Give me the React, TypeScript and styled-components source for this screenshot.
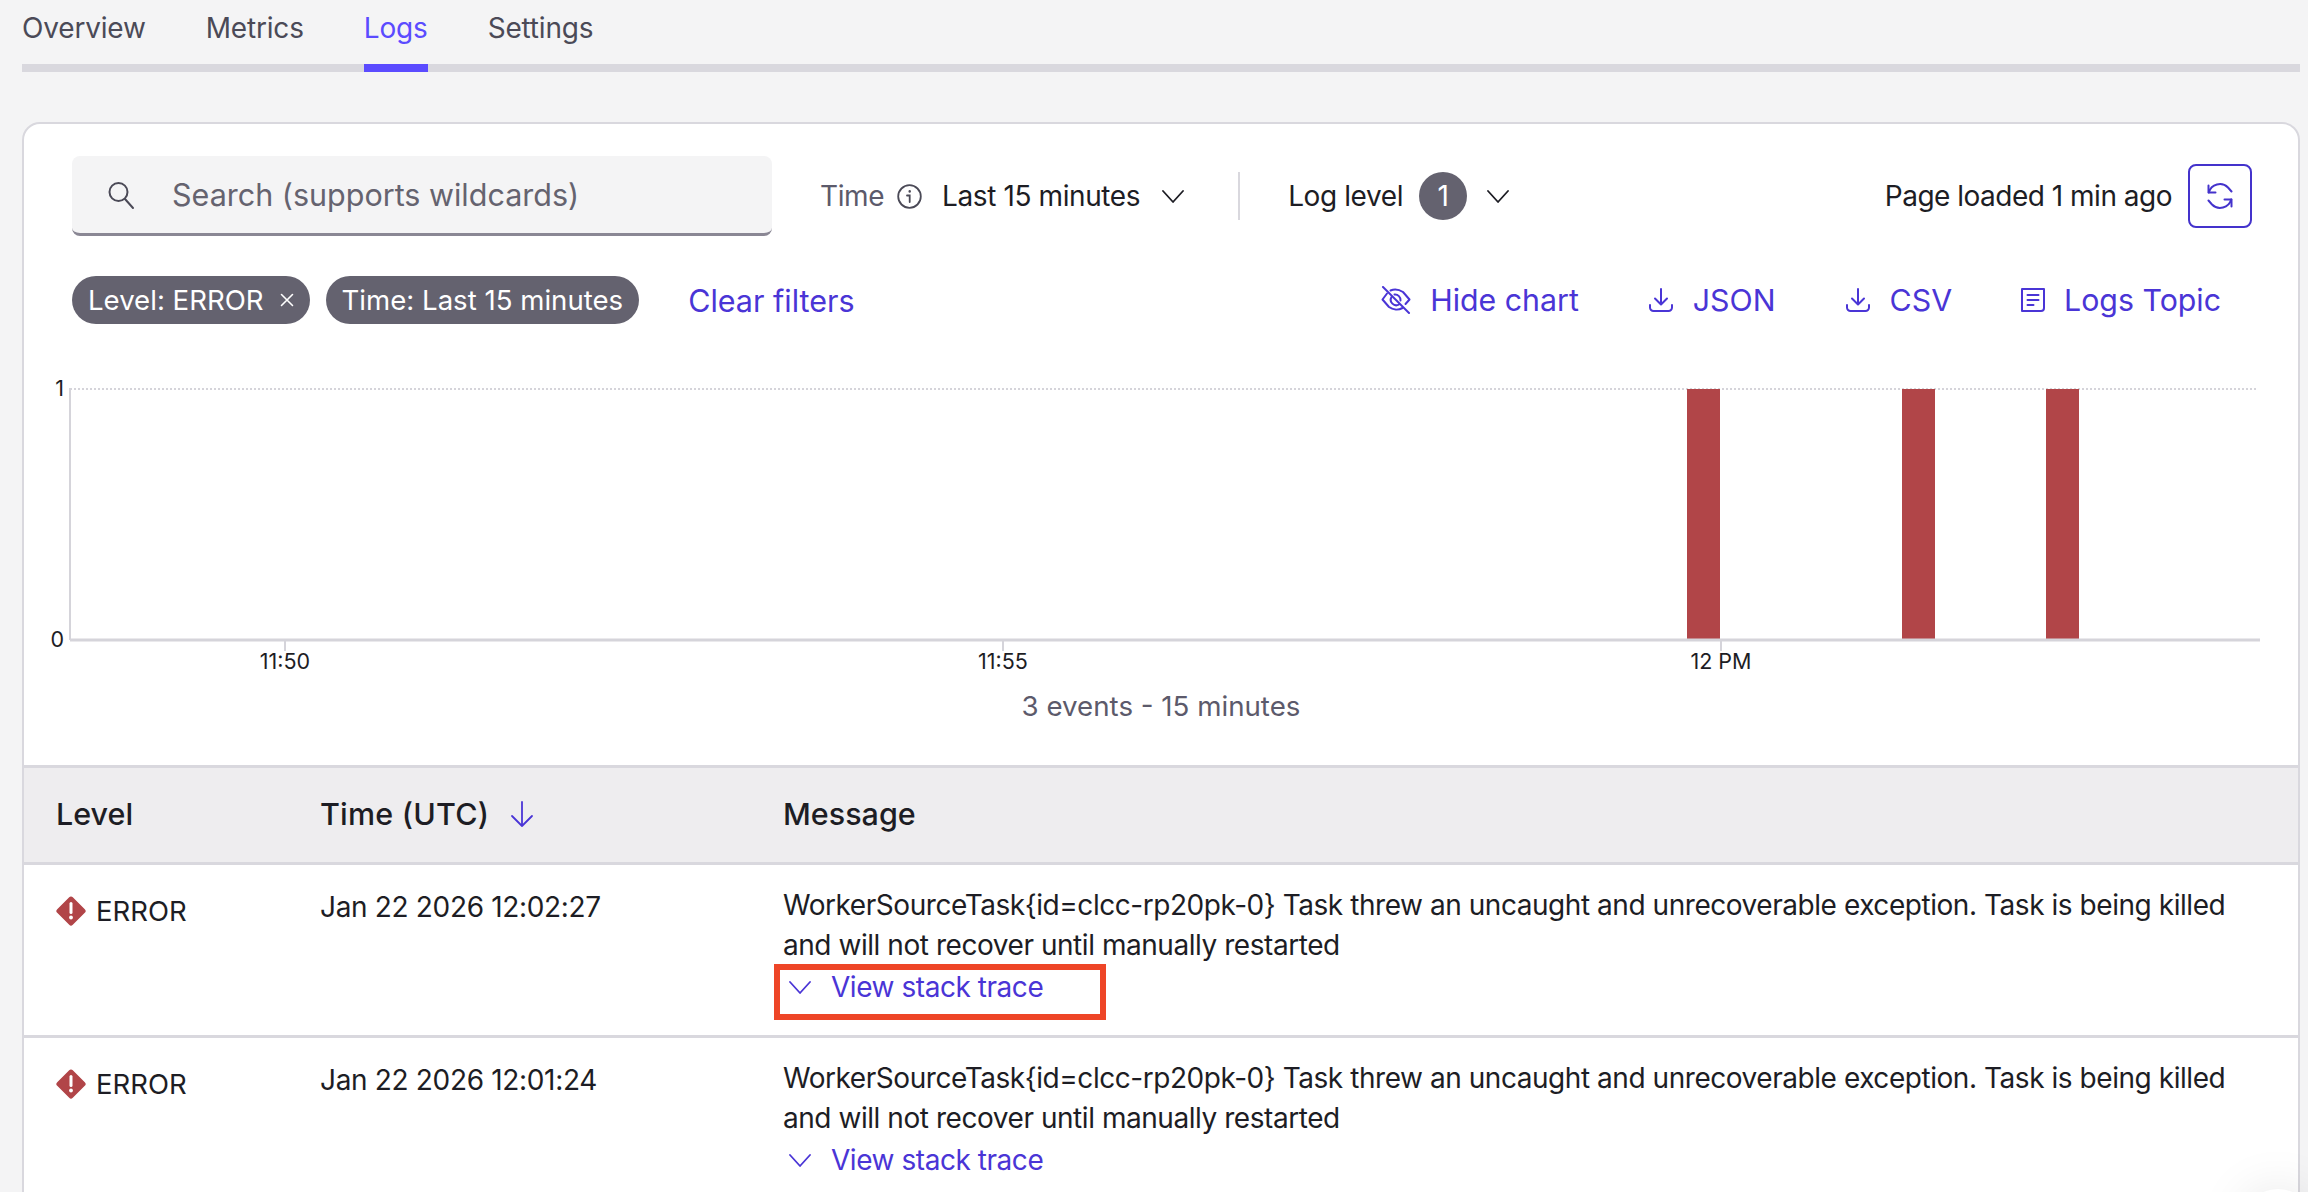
import React from 'react';
import styled, { createGlobalStyle } from 'styled-components';

const GlobalStyle = createGlobalStyle`
  html, body {
    margin: 0;
    height: 1192px;
    overflow: hidden;
    background: #f4f4f5;
    font-family: Inter, "Liberation Sans", sans-serif;
    color: #1d1d24;
  }
`;

const tabs = ['Overview', 'Metrics', 'Logs', 'Settings'];
const bars = [1663, 1878, 2022];
const ticks = [
  { x: 261, label: '11:50' },
  { x: 979, label: '11:55' },
  { x: 1697, label: '12 PM' }
];
const rows = [
  { time: 'Jan 22 2026 12:02:27', marked: true },
  { time: 'Jan 22 2026 12:01:24', marked: false }
];
const message =
  'WorkerSourceTask{id=clcc-rp20pk-0} Task threw an uncaught and unrecoverable exception. Task is being killed and will not recover until manually restarted';

function Chevron({ size = 22 }: { size?: number }) {
  return (
    <svg width={size} height={size} viewBox="0 0 22 22" fill="none" stroke="currentColor" strokeWidth="1.8">
      <path d="M1 6l10 11L21 6" strokeLinecap="round" strokeLinejoin="round" />
    </svg>
  );
}

function DownloadIcon() {
  return (
    <svg width="26" height="26" viewBox="0 0 26 26" fill="none" stroke="currentColor" strokeWidth="2" strokeLinecap="round" strokeLinejoin="round">
      <path d="M13 2v15M7 11.5l6 6 6-6" />
      <path d="M2 18v2.5a3.5 3.5 0 0 0 3.500 3.500h15a3.500 3.500 0 0 0 3.500-3.500V18" />
    </svg>
  );
}

function App() {
  return (
    <>
      <GlobalStyle />
      <Page>
        <TabBar>
          {tabs.map((tab) => (
            <Tab key={tab} $active={tab === 'Logs'}>
              {tab}
            </Tab>
          ))}
        </TabBar>
        <Card>
          <Filters>
            <TopRow>
              <SearchBox>
                <svg width="30" height="30" viewBox="0 0 30 30" fill="none" stroke="#4b4a57" strokeWidth="2" strokeLinecap="round">
                  <circle cx="12.500" cy="12" r="9" />
                  <path d="M19 19l8 9" />
                </svg>
                <span>Search (supports wildcards)</span>
              </SearchBox>
              <TimeGroup>
                <MutedLabel>Time</MutedLabel>
                <InfoWrap>
                  <svg width="25" height="25" viewBox="0 0 25 25" fill="none" stroke="#4b4a57" strokeWidth="1.800" strokeLinecap="round">
                    <circle cx="12.500" cy="12.500" r="11.300" />
                    <path d="M10 11.500h2.700v6.500" />
                    <path d="M12.700 7.300v.3" strokeWidth="2.400" />
                  </svg>
                </InfoWrap>
                <span>Last 15 minutes</span>
                <ChevronWrap>
                  <Chevron />
                </ChevronWrap>
              </TimeGroup>
              <Divider />
              <LevelGroup>
                <span>Log level</span>
                <CountBadge>1</CountBadge>
                <Chevron />
              </LevelGroup>
              <PageLoaded>
                <span>Page loaded 1 min ago</span>
                <RefreshButton>
                  <svg width="26" height="26" viewBox="0 0 26 26" fill="none" stroke="currentColor" strokeWidth="2" strokeLinecap="round" strokeLinejoin="round">
                    <path d="M1.500 2.500v7h7" />
                    <path d="M24.500 23.500v-7h-7" />
                    <path d="M1.800 9.500A11.500 11.500 0 0 1 21 4.500l3.500 4" />
                    <path d="M24.200 16.500A11.500 11.500 0 0 1 5 21.500l-3.500-4" />
                  </svg>
                </RefreshButton>
              </PageLoaded>
            </TopRow>
            <ChipRow>
              <Chip>
                Level: ERROR
                <svg width="14" height="14" viewBox="0 0 14 14" stroke="#fff" strokeWidth="1.600" strokeLinecap="round">
                  <path d="M1.500 1.500l11 11M12.500 1.500l-11 11" />
                </svg>
              </Chip>
              <Chip>Time: Last 15 minutes</Chip>
              <ClearLink>Clear filters</ClearLink>
              <Actions>
                <ActionLink>
                  <svg width="30" height="28" viewBox="0 0 30 28" fill="none" stroke="currentColor" strokeWidth="2" strokeLinecap="round" strokeLinejoin="round">
                    <path d="M2 1l26 26" />
                    <path d="M6 7.500L1.500 13.500 8 21c4 3 9.500 3.200 13.500 1M24.500 18l4-4.500L22 6C18 3.500 13.500 3 9.500 4.500" />
                    <path d="M10.500 11A5.500 5.500 0 0 0 18 18.500M13.500 8.500a5.500 5.500 0 0 1 6 6" />
                  </svg>
                  Hide chart
                </ActionLink>
                <ActionLink>
                  <DownloadIcon />
                  JSON
                </ActionLink>
                <ActionLink>
                  <DownloadIcon />
                  CSV
                </ActionLink>
                <ActionLink>
                  <svg width="24" height="26" viewBox="0 0 24 26" fill="none" stroke="currentColor" strokeWidth="2" strokeLinecap="round" strokeLinejoin="round">
                    <path d="M3 2h20v19a3 3 0 0 1-3 3H1V2z" />
                    <path d="M6.500 8h11M6.500 13h11M6.500 18h6" />
                  </svg>
                  Logs Topic
                </ActionLink>
              </Actions>
            </ChipRow>
          </Filters>

          <ChartWrap>
            <svg width="2276" height="320" viewBox="0 0 2276 320">
              <line x1="46" y1="29" x2="2232" y2="29" stroke="#d5d4da" strokeWidth="2" strokeDasharray="2 2" />
              <line x1="46" y1="28" x2="46" y2="280" stroke="#d5d4da" strokeWidth="2" />
              {bars.map((x) => (
                <rect key={x} x={x} y="29" width="33" height="251" fill="#b14548" />
              ))}
              <line x1="46" y1="280" x2="2236" y2="280" stroke="#d5d4da" strokeWidth="3" />
              {ticks.map((t) => (
                <g key={t.label}>
                  <line x1={t.x} y1="281" x2={t.x} y2="291" stroke="#d5d4da" strokeWidth="2" />
                  <AxisText x={t.x} y="309" textAnchor="middle">
                    {t.label}
                  </AxisText>
                </g>
              ))}
              <AxisText x="40" y="36" textAnchor="end">1</AxisText>
              <AxisText x="40" y="287" textAnchor="end">0</AxisText>
            </svg>
            <ChartCaption>3 events - 15 minutes</ChartCaption>
          </ChartWrap>

          <TableHead>
            <HeadLevel>Level</HeadLevel>
            <SortCell>
              Time (UTC)
              <svg width="24" height="28" viewBox="0 0 24 28" fill="none" stroke="#4a35d6" strokeWidth="1.800" strokeLinecap="round" strokeLinejoin="round">
                <path d="M12 2v24M2 16l10 10 10-10" />
              </svg>
            </SortCell>
            <span>Message</span>
          </TableHead>

          {rows.map((row) => (
            <LogRow key={row.time}>
              <LevelCell>
                <svg width="30" height="30" viewBox="0 0 30 30">
                  <path d="M15 .5a2.500 2.500 0 0 1 1.800.7l12 12a2.500 2.500 0 0 1 0 3.600l-12 12a2.500 2.500 0 0 1-3.600 0l-12-12a2.500 2.500 0 0 1 0-3.600l12-12A2.500 2.500 0 0 1 15 .5z" fill="#b14548" />
                  <path d="M15 7.500v9" stroke="#fff" strokeWidth="3" strokeLinecap="round" />
                  <circle cx="15" cy="21.500" r="1.900" fill="#fff" />
                </svg>
                ERROR
              </LevelCell>
              <TimeCell>{row.time}</TimeCell>
              <MessageCell>
                <MessageText>{message}</MessageText>
                <StackLink>
                  <Chevron size={22} />
                  View stack trace
                  {row.marked && <Annotation />}
                </StackLink>
              </MessageCell>
            </LogRow>
          ))}
        </Card>
      </Page>
      <CornerWidget />
    </>
  );
}

export default App;

const Page = styled.div`
  padding: 0 8px 0 22px;
`;

const TabBar = styled.div`
  display: flex;
  align-items: flex-start;
  gap: 60px;
  height: 64px;
  border-bottom: 8px solid #d9d8de;
`;

const Tab = styled.div<{ $active: boolean }>`
  height: 56px;
  padding-top: 8px;
  font-size: 28px;
  line-height: 40px;
  letter-spacing: -0.18px;
  color: ${(p) => (p.$active ? '#5b4bff' : '#4b4a57')};
  border-bottom: 8px solid ${(p) => (p.$active ? '#5b4bff' : 'transparent')};
`;

const Card = styled.div`
  margin-top: 50px;
  height: 1100px;
  background: #fff;
  border: 2px solid #d9d8de;
  border-radius: 18px 18px 0 0;
  overflow: hidden;
`;

const Filters = styled.div`
  padding: 32px 48px 0;
`;

const TopRow = styled.div`
  display: flex;
  align-items: center;
  font-size: 28px;
  letter-spacing: -0.4px;
  height: 80px;
`;

const SearchBox = styled.div`
  display: flex;
  align-items: center;
  gap: 36px;
  box-sizing: border-box;
  width: 700px;
  height: 80px;
  padding-left: 34px;
  background: #f4f4f5;
  border-bottom: 3px solid #8a8794;
  border-radius: 8px;
  font-size: 30.5px;
  letter-spacing: 0;
  color: #65636f;
`;

const TimeGroup = styled.div`
  display: flex;
  align-items: center;
  margin-left: 48px;
`;

const MutedLabel = styled.span`
  color: #5c5a6b;
`;

const InfoWrap = styled.span`
  display: flex;
  margin: 0 20px 0 13px;
`;

const ChevronWrap = styled.span`
  display: flex;
  margin-left: 22px;
`;

const Divider = styled.div`
  width: 2px;
  height: 48px;
  margin: 0 48px 0 54px;
  background: #d9d8de;
`;

const LevelGroup = styled.div`
  display: flex;
  align-items: center;
  gap: 16px;
`;

const CountBadge = styled.span`
  display: flex;
  align-items: center;
  justify-content: center;
  width: 48px;
  height: 48px;
  margin-right: 4px;
  border-radius: 50%;
  background: #64626f;
  color: #fff;
`;

const PageLoaded = styled.div`
  display: flex;
  align-items: center;
  gap: 16px;
  margin-left: auto;
  margin-right: -2px;
  letter-spacing: -0.5px;
`;

const RefreshButton = styled.div`
  display: flex;
  align-items: center;
  justify-content: center;
  box-sizing: border-box;
  width: 64px;
  height: 64px;
  border: 2px solid #4433cc;
  border-radius: 8px;
  color: #4433cc;
`;

const ChipRow = styled.div`
  display: flex;
  align-items: center;
  gap: 16px;
  margin-top: 40px;
  height: 48px;
`;

const Chip = styled.span`
  display: flex;
  align-items: center;
  gap: 16px;
  height: 48px;
  padding: 0 16px;
  border-radius: 24px;
  background: #64626f;
  color: #fff;
  font-size: 27.6px;
`;

const ClearLink = styled.span`
  margin-left: 33px;
  color: #4a35d6;
  font-size: 30.5px;
`;

const Actions = styled.div`
  display: flex;
  align-items: center;
  gap: 69px;
  margin-left: auto;
  margin-right: 29px;
`;

const ActionLink = styled.span`
  display: flex;
  align-items: center;
  gap: 19px;
  color: #4a35d6;
  font-size: 30.3px;
`;

const ChartWrap = styled.div`
  margin-top: 36px;
  padding-bottom: 39px;
`;

const AxisText = styled.text`
  font-family: Inter, "Liberation Sans", sans-serif;
  font-size: 21.5px;
  fill: #1d1d24;
`;

const ChartCaption = styled.div`
  margin-top: 2px;
  text-align: center;
  font-size: 27.7px;
  line-height: 40px;
  color: #5c5a6b;
`;

const columns = `
  display: grid;
  grid-template-columns: 263px 463px 1fr;
  padding: 0 33px;
`;

const TableHead = styled.div`
  ${columns}
  align-items: center;
  box-sizing: content-box;
  height: 91px;
  padding-bottom: 3px;
  background: #eeedef;
  border-top: 3px solid #d9d8de;
  border-bottom: 3px solid #d9d8de;
  font-size: 30.5px;
  font-weight: 450;
`;

const HeadLevel = styled.span`
  margin-left: -1px;
`;

const SortCell = styled.span`
  display: flex;
  align-items: center;
  gap: 21px;
  letter-spacing: 0.2px;
`;

const LogRow = styled.div`
  ${columns}
  padding-top: 20px;
  padding-bottom: 0;
  box-sizing: border-box;
  height: 173px;
  border-bottom: 3px solid #d9d8de;
  font-size: 28px;
  line-height: 40px;
  letter-spacing: -0.45px;
`;

const LevelCell = styled.div`
  display: flex;
  align-items: center;
  align-self: start;
  gap: 10px;
  margin-top: 6px;
  margin-left: -1px;
  letter-spacing: 0;
  font-size: 27.5px;
`;

const TimeCell = styled.div`
  margin-top: 2px;
  font-size: 28px;
  letter-spacing: -0.33px;
`;

const MessageCell = styled.div`
  display: flex;
  flex-direction: column;
`;

const MessageText = styled.div`
  max-width: 1460px;
`;

const StackLink = styled.div`
  position: relative;
  display: flex;
  align-items: center;
  gap: 20px;
  margin-top: 2px;
  padding-left: 6px;
  color: #4a35d6;
`;

const Annotation = styled.div`
  position: absolute;
  left: -9px;
  top: -3px;
  width: 332px;
  height: 56px;
  box-sizing: border-box;
  border: 6px solid #ee4527;
`;

const CornerWidget = styled.div`
  position: fixed;
  top: 1189px;
  left: 2242px;
  width: 72px;
  height: 72px;
  border-radius: 50%;
  background: #fff;
  box-shadow: 0 0 50px rgba(0, 0, 0, 0.1);
`;
